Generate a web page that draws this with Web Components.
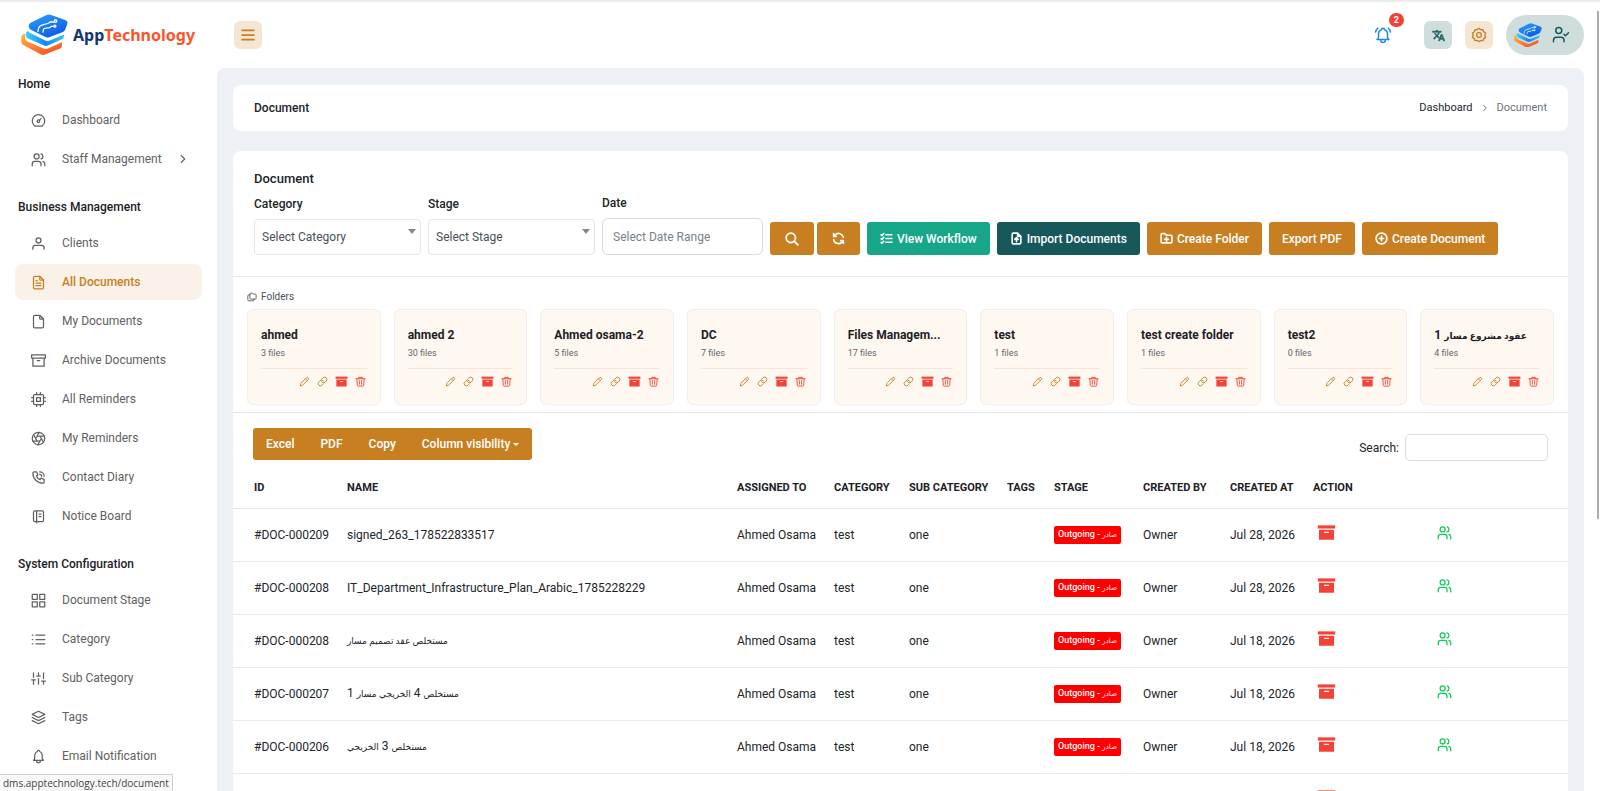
<!DOCTYPE html>
<html lang="en">
<head>
<meta charset="utf-8">
<meta name="viewport" content="width=device-width, initial-scale=1">
<title>Document</title>
<style>
	:root {
		--primary: #c87f22;
		--primary-soft: #f5e6d3;
		--teal: #17595a;
		--teal-soft: #cfdedd;
		--green: #18a689;
		--danger: #f44336;
		--surface: #edf1f6;
		--line: #ebebed;
		--ink: #212529;
		--muted: #616161;
	}
	body {
		margin: 0;
		background: #fff;
		color: var(--ink);
		font: 12px/16px Roboto, "DejaVu Sans", sans-serif;
	}
</style>
</head>
<body>
<dms-app>
	<dms-topbar slot="top"></dms-topbar>

	<dms-sidebar slot="side">
		<nav-group label="Home">
			<nav-item icon="gauge">Dashboard</nav-item>
			<nav-item icon="users" expandable>Staff Management</nav-item>
		</nav-group>
		<nav-group label="Business Management">
			<nav-item icon="user">Clients</nav-item>
			<nav-item icon="file-text" active>All Documents</nav-item>
			<nav-item icon="file">My Documents</nav-item>
			<nav-item icon="archive">Archive Documents</nav-item>
			<nav-item icon="cpu">All Reminders</nav-item>
			<nav-item icon="aperture">My Reminders</nav-item>
			<nav-item icon="phone">Contact Diary</nav-item>
			<nav-item icon="notebook">Notice Board</nav-item>
		</nav-group>
		<nav-group label="System Configuration">
			<nav-item icon="grid">Document Stage</nav-item>
			<nav-item icon="list">Category</nav-item>
			<nav-item icon="sliders">Sub Category</nav-item>
			<nav-item icon="layers">Tags</nav-item>
			<nav-item icon="bell">Email Notification</nav-item>
		</nav-group>
	</dms-sidebar>

	<page-breadcrumb heading="Document"></page-breadcrumb>
	<page-card>
		<document-filters></document-filters>
		<folder-list>
			<folder-card name="ahmed" files="3"></folder-card>
			<folder-card name="ahmed 2" files="30"></folder-card>
			<folder-card name="Ahmed osama-2" files="5"></folder-card>
			<folder-card name="DC" files="7"></folder-card>
			<folder-card name="Files Managem..." files="17"></folder-card>
			<folder-card name="test" files="1"></folder-card>
			<folder-card name="test create folder" files="1"></folder-card>
			<folder-card name="test2" files="0"></folder-card>
			<folder-card name="عقود مشروع مسار 1" files="4"></folder-card>
		</folder-list>
		<table-tools></table-tools>
		<document-table></document-table>
	</page-card>

	<status-hint slot="overlay">dms.apptechnology.tech/document</status-hint>
</dms-app>

<script>
const ICONS = {
	'gauge': '<circle cx="12" cy="13" r="2"/><path d="M13.5 11.5l2.5-2.5M6.4 21a10 10 0 1 1 11.2 0z"/>',
	'users': '<circle cx="9" cy="7" r="4"/><path d="M2 22v-3a4 4 0 0 1 4-4h6a4 4 0 0 1 4 4v3M16 3.1a4 4 0 0 1 0 7.8M22 22v-3a4 4 0 0 0-3-3.9"/>',
	'user': '<circle cx="12" cy="7" r="4"/><path d="M3 21v-2a4 4 0 0 1 4-4h10a4 4 0 0 1 4 4v2"/>',
	'user-check': '<circle cx="9" cy="6" r="4"/><path d="M2 21v-2a4 4 0 0 1 4-4h6a4 4 0 0 1 4 4v2M16 11l2 2l4-4"/>',
	'file': '<path d="M14 2v5a1 1 0 0 0 1 1h5M18 22H6a2 2 0 0 1-2-2V4a2 2 0 0 1 2-2h8l6 6v12a2 2 0 0 1-2 2z"/>',
	'file-text': '<path d="M14 2v5a1 1 0 0 0 1 1h5M18 22H6a2 2 0 0 1-2-2V4a2 2 0 0 1 2-2h8l6 6v12a2 2 0 0 1-2 2zM8 9h2M8 13h8M8 17h8"/>',
	'file-up': '<path d="M14 2v5a1 1 0 0 0 1 1h5M18 22H6a2 2 0 0 1-2-2V4a2 2 0 0 1 2-2h8l6 6v12a2 2 0 0 1-2 2zM12 18v-7M9 13.5l3-3l3 3"/>',
	'archive': '<path d="M21 8v13H3V8M1 3h22v5H1zM10 12h4"/>',
	'archive-fill': '<g fill="currentColor" stroke="none"><path d="M1 3h22v4H1z"/><path fill-rule="evenodd" d="M2.5 8.5h19V21h-19zM9 11v1.5h6V11z"/></g>',
	'cpu': '<rect x="4" y="4" width="16" height="16" rx="2"/><path d="M9 9h6v6H9zM1 9h3M1 15h3M9 1v3M15 1v3M23 9h-3M23 15h-3M15 23v-3M9 23v-3"/>',
	'aperture': '<circle cx="12" cy="12" r="10"/><path d="M14.3 8l5.7 9.9M9.7 8h11.5M7.4 12l5.7-9.9M9.7 16L4 6.1M14.3 16H2.8M16.6 12l-5.7 9.9"/>',
	'phone': '<path d="M5 3h4l2 5l-2.5 1.5a11 11 0 0 0 6 6L16 13l5 2v4a2 2 0 0 1-2 2A16 16 0 0 1 3 5a2 2 0 0 1 2-2M14 7a3 3 0 0 1 3 3M14 3a7 7 0 0 1 7 7"/>',
	'notebook': '<path d="M6 3h12a2 2 0 0 1 2 2v13a2 2 0 0 1-2 2H6a2 2 0 0 1-2-2V5a2 2 0 0 1 2-2M9 3v19M13 8h3M13 12h3"/>',
	'grid': '<path d="M2 2h8v8H2zM14 2h8v8h-8zM2 14h8v8H2zM14 14h8v8h-8z"/>',
	'list': '<path d="M8 5h14M8 12h14M8 19h14M2 5h1M2 12h1M2 19h1"/>',
	'sliders': '<path d="M4 21v-7M4 10V3M12 21v-9M12 8V3M20 21v-5M20 12V3M1 14h6M9 8h6M17 16h6"/>',
	'layers': '<path d="M12 2L2 7l10 5l10-5zM2 12l10 5l10-5M2 17l10 5l10-5"/>',
	'bell': '<path d="M10 4a2 2 0 1 1 4 0a7 7 0 0 1 4 6v4a4 4 0 0 0 2 4H4a4 4 0 0 0 2-4v-4a7 7 0 0 1 4-6M9 18v1a3 3 0 0 0 6 0v-1"/>',
	'bell-ring': '<path d="M10 5a2 2 0 1 1 4 0a6 6 0 0 1 4 6v4a4 4 0 0 0 2 3H4a4 4 0 0 0 2-3v-4a6 6 0 0 1 4-6M9 18v1a3 3 0 0 0 6 0v-1M22 8a9 9 0 0 0-3-5M2 8a9 9 0 0 1 3-5"/>',
	'menu': '<path d="M2 4h20M2 12h20M2 20h20"/>',
	'translate': '<path fill="currentColor" stroke-width="1" d="M12.87 15.07l-2.54-2.51.03-.03A17.52 17.52 0 0 0 14.07 6H17V4h-7V2H8v2H1v2h11.17C11.5 7.92 10.44 9.75 9 11.35 8.07 10.32 7.3 9.19 6.69 8h-2c.73 1.63 1.73 3.17 2.98 4.56l-5.09 5.02L4 19l5-5 3.11 3.11zM18.5 10h-2L12 22h2l1.12-3h4.75L21 22h2zm-2.62 7l1.62-4.33L19.12 17z"/>',
	'settings': '<circle cx="12" cy="12" r="3.5"/><path d="M12 2l2.7 2.2l3.4-.3l.9 3.3l2.9 1.9l-1.2 3.2l1.2 3.2l-2.9 1.9l-.9 3.1l-3.4-.2L12 22l-2.7-1.7l-3.4.2l-.9-3.1l-2.9-1.9l1.2-3.2l-1.2-3.2L5 7.2l.9-3.3l3.4.3z"/>',
	'search': '<circle cx="10" cy="10" r="8"/><path d="M22 22l-6-6"/>',
	'refresh': '<path d="M21 10A9 9 0 0 0 6 5L3 8M3 3v5h5M3 14a9 9 0 0 0 15 5l3-3M21 21v-5h-5"/>',
	'checks': '<path d="M2 5l1.5 1.5L7 3M2 12l1.5 1.5L7 10M2 19l1.5 1.5L7 17M11 5h11M11 12h11M11 19h11"/>',
	'folder-plus': '<path d="M20 20H4a2 2 0 0 1-2-2V5a2 2 0 0 1 2-2h5l3 3h8a2 2 0 0 1 2 2v10a2 2 0 0 1-2 2zM12 10v7M8.5 13.5h7"/>',
	'circle-plus': '<circle cx="12" cy="12" r="10"/><path d="M12 8v8M8 12h8"/>',
	'folders': '<path d="M9 3h4l2 2h5a2 2 0 0 1 2 2v8a2 2 0 0 1-2 2H9a2 2 0 0 1-2-2V5a2 2 0 0 1 2-2M17 17v2a2 2 0 0 1-2 2H4a2 2 0 0 1-2-2V9a2 2 0 0 1 2-2h3"/>',
	'pencil': '<path d="M3 21l1-5L16 4a2.8 2.8 0 0 1 4 4L8 20zM14 6l4 4"/>',
	'link': '<path d="M10 13a5 5 0 0 0 7.5.5l3-3a5 5 0 0 0-7-7L10 7M14 11a5 5 0 0 0-7.5-.5l-3 3a5 5 0 0 0 7 7L14 17"/>',
	'trash': '<path d="M2 6h20M8 6V3h8v3M4 6l1 14a2 2 0 0 0 2 2h10a2 2 0 0 0 2-2l1-14M9.5 10v8M14.5 10v8"/>',
	'chevron': '<path d="M8 4l8 8l-8 8"/>'
};

// Attach an open shadow root and fill it with the element's styles and markup.
function render(host, css, html) {
	host.attachShadow({ mode: 'open' });
	host.shadowRoot.innerHTML = `<style>*{box-sizing:border-box}${css}</style>${html}`;
}

// The Arabic fallback face runs large next to Roboto, so its words get a class of their own.
function wrapArabic(text) {
	return text.replace(/[\u0600-\u06ff]+(\s[\u0600-\u06ff]+)*/g, '<span class="ar" lang="ar">$&</span>');
}

class DmsIcon extends HTMLElement {
	connectedCallback() {
		if (this.shadowRoot) return;
		const size = this.getAttribute('size') || 14;
		const stroke = this.getAttribute('stroke') || 2;
		render(this, `
			:host { display: inline-flex; flex: none; }
			svg { display: block; }
		`, `<svg width="${size}" height="${size}" viewBox="0 0 24 24" fill="none" stroke="currentColor" stroke-width="${stroke}" stroke-linecap="round" stroke-linejoin="round" aria-hidden="true">${ICONS[this.getAttribute('name')]}</svg>`);
	}
}

class BrandMark extends HTMLElement {
	connectedCallback() {
		if (this.shadowRoot) return;
		render(this, `
			:host { display: inline-flex; flex: none; width: 47px; }
			svg { display: block; width: 100%; height: auto; }
		`, `
			<svg viewBox="0 0 147 130" aria-hidden="true">
				<defs>
					<linearGradient id="top" x1="0" y1="0" x2=".6" y2="1"><stop offset="0" stop-color="#28a4fb"/><stop offset="1" stop-color="#0f5ae8"/></linearGradient>
					<linearGradient id="mid" x1="0" y1="0" x2="1" y2="0"><stop offset="0" stop-color="#3fd0fd"/><stop offset=".5" stop-color="#1287f8"/><stop offset="1" stop-color="#35c3fb"/></linearGradient>
					<linearGradient id="low" x1="0" y1="0" x2=".8" y2="1"><stop offset="0" stop-color="#ffb83c"/><stop offset="1" stop-color="#fb4d26"/></linearGradient>
				</defs>
				<path fill="url(#low)" d="M13 61L6 64Q1 67 1 73V88Q1 93 6 96L61 126Q68 130 75 127L122 108Q128 105 128 99V88L84 108Q77 111 70 108L20 86Q13 83 13 77Z"/>
				<path fill="url(#mid)" d="M20 53Q15 56 15 62V68Q16 74 22 77L70 98Q78 102 86 98L126 80Q133 77 134 71L135 64L90 83Q82 86 74 82L26 58Z"/>
				<path fill="url(#top)" d="M30 27L78 4Q86 0 94 3L138 19Q147 23 145 30L138 49Q136 54 129 57L90 72Q82 75 75 71L32 50Q24 46 24 40Q24 30 30 27Z"/>
				<g fill="none" stroke="#fff" stroke-width="4" stroke-linecap="round">
					<path d="M53 55L55 44Q57 37 65 35L86 29L91 25H103M69 57L70 49Q71 44 78 44L90 43L94 39H101"/>
					<circle cx="108" cy="22" r="4"/><circle cx="106" cy="38" r="3"/>
				</g>
			</svg>
		`);
	}
}

class DmsApp extends HTMLElement {
	connectedCallback() {
		render(this, `
			:host {
				display: grid;
				grid-template: auto 1fr / 217px 1fr;
				position: relative;
				height: 100vh;
				overflow: hidden;
				border-top: 2px solid #ededed;
				box-sizing: border-box;
			}
			header { grid-column: 1 / -1; }
			aside { min-height: 0; }
			main {
				min-width: 0;
				margin-right: 16px;
				padding: 17px 16px 0;
				background: var(--surface);
				border-radius: 8px 8px 0 0;
			}
			.scroll {
				position: absolute;
				top: 9px;
				right: 1px;
				width: 2px;
				height: 508px;
				background: #acacac;
			}
		`, `
			<header><slot name="top"></slot></header>
			<aside><slot name="side"></slot></aside>
			<main><slot></slot></main>
			<div class="scroll"></div>
			<slot name="overlay"></slot>
		`);
	}
}

class DmsTopbar extends HTMLElement {
	connectedCallback() {
		render(this, `
			:host { display: flex; align-items: center; height: 66px; padding: 0 16px 0 21px; }
			.brand {
				display: flex;
				align-items: center;
				gap: 5px;
				width: 213px;
				color: #123578;
				font: 700 16px/24px "Noto Sans", sans-serif;
				text-decoration: none;
			}
			.brand span span { color: #fb542b; }
			button { display: grid; place-items: center; border: 0; padding: 0; font: inherit; cursor: pointer; }
			.square { width: 28px; height: 28px; border-radius: 6px; background: var(--primary-soft); color: var(--primary); }
			.teal { background: var(--teal-soft); color: var(--teal); }
			.actions { display: flex; align-items: center; gap: 13px; margin-left: auto; }
			.alerts { position: relative; width: 28px; height: 28px; margin-right: 14px; background: none; color: #1e88e5; }
			.count {
				position: absolute;
				top: -8px;
				right: -7px;
				padding: 0 5px;
				border-radius: 7px;
				background: var(--danger);
				color: #fff;
				font: 700 9px/14px Roboto, sans-serif;
			}
			.profile {
				display: flex;
				align-items: center;
				gap: 10px;
				height: 40px;
				padding: 0 14px 0 8px;
				border-radius: 20px;
				background: var(--teal-soft);
				color: var(--teal);
			}
			.profile brand-mark { width: 28px; }
		`, `
			<a class="brand" href="#"><brand-mark></brand-mark><span>App<span>Technology</span></span></a>
			<button class="square" aria-label="Toggle menu"><dms-icon name="menu" stroke="3"></dms-icon></button>
			<div class="actions">
				<button class="alerts" aria-label="Notifications"><dms-icon name="bell-ring" size="18"></dms-icon><span class="count">2</span></button>
				<button class="square teal" aria-label="Language"><dms-icon name="translate" size="13"></dms-icon></button>
				<button class="square" aria-label="Settings"><dms-icon name="settings" size="16"></dms-icon></button>
				<button class="profile" aria-label="Account"><brand-mark></brand-mark><dms-icon name="user-check" size="18"></dms-icon></button>
			</div>
		`);
	}
}

class DmsSidebar extends HTMLElement {
	connectedCallback() {
		render(this, `
			:host { display: block; }
			nav { display: flex; flex-direction: column; gap: 22px; padding: 8px 15px 0; }
		`, '<nav><slot></slot></nav>');
	}
}

class NavGroup extends HTMLElement {
	connectedCallback() {
		render(this, `
			:host { display: block; }
			h2 { margin: 0 0 10px 3px; font: inherit; font-weight: 500; color: #1d2126; }
			div { display: flex; flex-direction: column; gap: 3px; }
		`, `<h2>${this.getAttribute('label')}</h2><div><slot></slot></div>`);
	}
}

class NavItem extends HTMLElement {
	connectedCallback() {
		render(this, `
			:host { display: block; }
			a {
				display: flex;
				align-items: center;
				gap: 16px;
				height: 36px;
				padding: 0 16px;
				border-radius: 8px;
				color: var(--muted);
				text-decoration: none;
				white-space: nowrap;
			}
			:host([active]) a { background: #faf2e9; color: var(--primary); font-weight: 500; }
		`, `
			<a href="#">
				<dms-icon name="${this.getAttribute('icon')}" size="15"></dms-icon>
				<slot></slot>
				${this.hasAttribute('expandable') ? '<dms-icon name="chevron" size="10" stroke="3"></dms-icon>' : ''}
			</a>
		`);
	}
}

class PageBreadcrumb extends HTMLElement {
	connectedCallback() {
		render(this, `
			:host {
				display: flex;
				align-items: center;
				justify-content: space-between;
				height: 46px;
				margin-bottom: 20px;
				padding: 0 21px;
				border-radius: 8px;
				background: #fff;
				box-sizing: border-box;
			}
			h1 { margin: 0; font: inherit; font-weight: 500; }
			nav { display: flex; align-items: center; gap: 8px; color: #6c757d; font-size: 11px; }
			a { color: var(--ink); text-decoration: none; }
		`, `
			<h1>${this.getAttribute('heading')}</h1>
			<nav aria-label="Breadcrumb"><a href="#">Dashboard</a><dms-icon name="chevron" size="8" stroke="3"></dms-icon><span>Document</span></nav>
		`);
	}
}

class PageCard extends HTMLElement {
	connectedCallback() {
		render(this, `
			:host { display: block; border-radius: 8px 8px 0 0; background: #fff; }
		`, '<slot></slot>');
	}
}

class DocumentFilters extends HTMLElement {
	connectedCallback() {
		render(this, `
			:host { display: block; padding: 20px 21px 21px; border-bottom: 1px solid var(--line); }
			h2 { margin: 0 0 8px; font: 500 13px/16px Roboto, sans-serif; }
			form { display: flex; align-items: flex-end; gap: 7px; }
			label { display: block; margin-bottom: 7px; font-weight: 500; }
			.select { position: relative; width: 167px; }
			.select::after {
				content: "";
				position: absolute;
				right: 5px;
				bottom: 21px;
				border: 4px solid transparent;
				border-top: 5px solid #888;
				border-bottom: 0;
			}
			select, input {
				display: block;
				width: 100%;
				height: 36px;
				padding: 0 7px;
				border: 1px solid #e3e5e8;
				border-radius: 4px;
				background: #fff;
				color: #495057;
				font: inherit;
				appearance: none;
			}
			.date { width: 161px; }
			input { height: 37px; padding: 0 10px; border-color: #d5dae1; border-radius: 6px; }
			input::placeholder { color: #79818b; opacity: 1; }
			.pair { display: flex; gap: 3px; }
			button {
				display: inline-flex;
				align-items: center;
				gap: 4px;
				height: 33px;
				padding: 0 13px;
				border: 0;
				border-radius: 3px;
				background: var(--primary);
				color: #fff;
				font: inherit;
				font-weight: 500;
				white-space: nowrap;
				cursor: pointer;
			}
			.pair button { padding: 0 15px; }
			.flow { background: var(--green); }
			.import { background: var(--teal); }
		`, `
			<h2>Document</h2>
			<form onsubmit="return false">
				<div class="select"><label for="category">Category</label><select id="category"><option>Select Category</option></select></div>
				<div class="select"><label for="stage">Stage</label><select id="stage"><option>Select Stage</option></select></div>
				<div class="date"><label for="date">Date</label><input id="date" placeholder="Select Date Range"></div>
				<div class="pair">
					<button aria-label="Search"><dms-icon name="search" stroke="3"></dms-icon></button>
					<button aria-label="Reset"><dms-icon name="refresh" stroke="3" size="13"></dms-icon></button>
				</div>
				<button class="flow"><dms-icon name="checks" stroke="3" size="13"></dms-icon>View Workflow</button>
				<button class="import"><dms-icon name="file-up" stroke="3" size="13"></dms-icon>Import Documents</button>
				<button><dms-icon name="folder-plus" stroke="3" size="13"></dms-icon>Create Folder</button>
				<button>Export PDF</button>
				<button><dms-icon name="circle-plus" stroke="3" size="13"></dms-icon>Create Document</button>
			</form>
		`);
	}
}

class FolderList extends HTMLElement {
	connectedCallback() {
		render(this, `
			:host { display: block; padding: 13px 14px 7px; border-bottom: 1px solid #e3e5e8; }
			h3 { display: flex; align-items: center; gap: 4px; margin: 0 0 5px; font: 400 10px/14px Roboto, sans-serif; color: #495057; }
			div { display: grid; grid-template-columns: repeat(9, minmax(0, 1fr)); gap: 13px; }
		`, '<h3><dms-icon name="folders" size="10"></dms-icon>Folders</h3><div><slot></slot></div>');
	}
}

class FolderCard extends HTMLElement {
	connectedCallback() {
		render(this, `
			:host {
				display: block;
				padding: 17px 13px 16px;
				border: 1px solid #f1eeeb;
				border-radius: 6px;
				background: #fff8f0;
			}
			h4 { margin: 0; height: 16px; font: inherit; font-weight: 700; white-space: nowrap; color: #1d2126; }
			.ar { font-size: 9px; }
			p { margin: 3px 0 8px; font-size: 9px; line-height: 14px; color: #5f666d; }
			div { display: flex; align-items: center; justify-content: flex-end; gap: 7px; padding: 6px 1px 0 0; border-top: 1px solid #f7e3d8; }
			button { display: flex; border: 0; padding: 0; background: none; color: var(--primary); cursor: pointer; }
			.danger { color: var(--danger); }
		`, `
			<h4>${wrapArabic(this.getAttribute('name'))}</h4>
			<p>${this.getAttribute('files')} files</p>
			<div>
				<button aria-label="Rename"><dms-icon name="pencil" size="11"></dms-icon></button>
				<button aria-label="Copy link"><dms-icon name="link" size="11"></dms-icon></button>
				<button class="danger" aria-label="Archive"><dms-icon name="archive-fill" size="13"></dms-icon></button>
				<button class="danger" aria-label="Delete"><dms-icon name="trash" size="11"></dms-icon></button>
			</div>
		`);
	}
}

class TableTools extends HTMLElement {
	connectedCallback() {
		render(this, `
			:host { display: flex; align-items: center; justify-content: space-between; padding: 14px 20px 0; }
			.group { display: flex; border-radius: 3px; overflow: hidden; background: var(--primary); }
			button {
				display: flex;
				align-items: center;
				gap: 3px;
				height: 32px;
				padding: 0 13px;
				border: 0;
				background: none;
				color: #fff;
				font: inherit;
				font-weight: 500;
				cursor: pointer;
			}
			.caret::after { content: ""; border: 3px solid transparent; border-top-color: #fff; border-bottom: 0; }
			label { display: flex; align-items: center; gap: 6px; padding-top: 7px; }
			input { width: 143px; height: 27px; border: 1px solid #dadde5; border-radius: 5px; background: #fff; font: inherit; }
		`, `
			<div class="group">
				<button>Excel</button><button>PDF</button><button>Copy</button><button class="caret">Column visibility</button>
			</div>
			<label>Search: <input type="search"></label>
		`);
	}
}

const DOCUMENTS = [
	['#DOC-000209', 'signed_263_178522833517', 'Jul 28, 2026'],
	['#DOC-000208', 'IT_Department_Infrastructure_Plan_Arabic_1785228229', 'Jul 28, 2026'],
	['#DOC-000208', 'مستخلص عقد تصميم مسار', 'Jul 18, 2026'],
	['#DOC-000207', 'مستخلص 4 الخريجي مسار 1', 'Jul 18, 2026'],
	['#DOC-000206', 'مستخلص 3 الخريجي', 'Jul 18, 2026'],
	['#DOC-000205', 'مستخلص 2 الخريجي', 'Jul 18, 2026']
];

class DocumentTable extends HTMLElement {
	connectedCallback() {
		render(this, `
			:host { display: block; }
			table { width: 100%; border-collapse: collapse; table-layout: fixed; }
			th, td { padding: 0 0 0 10px; border-bottom: 1px solid var(--line); text-align: left; white-space: nowrap; }
			th { height: 47px; padding-top: 7px; border-color: #e3e5e8; font-size: 11px; font-weight: 700; color: #1d2126; }
			td { height: 53px; }
			th:first-child, td:first-child { padding-left: 21px; }
			.id { width: 104px; }
			.assigned { width: 97px; }
			.category { width: 75px; }
			.sub { width: 98px; }
			.tags { width: 47px; }
			.stage { width: 89px; }
			.by { width: 87px; }
			.at { width: 83px; }
			.action { width: 265px; }
			.ar { font-size: 9px; }
			.badge { display: inline-block; padding: 0 4px; border-radius: 2px; background: #f00; color: #fff; font-size: 9px; line-height: 17px; font-weight: 500; }
			.badge .ar { font-size: 7px; }
			.buttons { display: grid; grid-template-columns: 120px auto; justify-content: start; align-items: center; padding: 0 0 5px 4px; }
			button { display: flex; justify-self: start; border: 0; padding: 0; background: none; color: var(--danger); cursor: pointer; }
			.share { color: #12c95c; }
		`, `
			<table>
				<thead>
					<tr>
						<th class="id">ID</th><th>NAME</th><th class="assigned">ASSIGNED TO</th><th class="category">CATEGORY</th>
						<th class="sub">SUB CATEGORY</th><th class="tags">TAGS</th><th class="stage">STAGE</th>
						<th class="by">CREATED BY</th><th class="at">CREATED AT</th><th class="action">ACTION</th>
					</tr>
				</thead>
				<tbody>${DOCUMENTS.map((doc) => this.row(doc)).join('')}</tbody>
			</table>
		`);
	}

	row([id, name, date]) {
		return `
			<tr>
				<td>${id}</td>
				<td>${wrapArabic(name)}</td>
				<td>Ahmed Osama</td>
				<td>test</td>
				<td>one</td>
				<td></td>
				<td><span class="badge">${wrapArabic('Outgoing - صادر')}</span></td>
				<td>Owner</td>
				<td>${date}</td>
				<td>
					<div class="buttons">
						<button aria-label="Archive"><dms-icon name="archive-fill" size="19"></dms-icon></button>
						<button class="share" aria-label="Share"><dms-icon name="users" size="15"></dms-icon></button>
					</div>
				</td>
			</tr>
		`;
	}
}

class StatusHint extends HTMLElement {
	connectedCallback() {
		render(this, `
			:host {
				position: absolute;
				left: 0;
				bottom: 0;
				padding: 0 3px;
				border: 1px solid #d0d0d0;
				border-width: 1px 1px 0 0;
				background: #f8f8f8;
				color: #444;
				font: 10px/16px "Open Sans", sans-serif;
			}
		`, '<slot></slot>');
	}
}

customElements.define('dms-icon', DmsIcon);
customElements.define('brand-mark', BrandMark);
customElements.define('dms-app', DmsApp);
customElements.define('dms-topbar', DmsTopbar);
customElements.define('dms-sidebar', DmsSidebar);
customElements.define('nav-group', NavGroup);
customElements.define('nav-item', NavItem);
customElements.define('page-breadcrumb', PageBreadcrumb);
customElements.define('page-card', PageCard);
customElements.define('document-filters', DocumentFilters);
customElements.define('folder-list', FolderList);
customElements.define('folder-card', FolderCard);
customElements.define('table-tools', TableTools);
customElements.define('document-table', DocumentTable);
customElements.define('status-hint', StatusHint);
</script>
</body>
</html>
